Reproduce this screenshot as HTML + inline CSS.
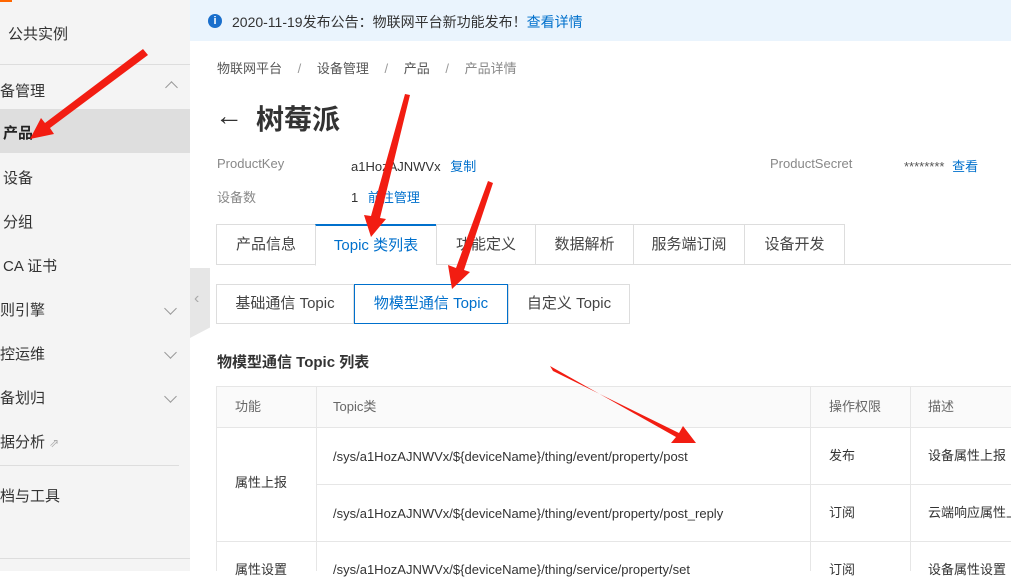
<!DOCTYPE html>
<html><head><meta charset="utf-8"><style>
*{margin:0;padding:0;box-sizing:border-box}
body{width:1011px;height:571px;overflow:hidden;position:relative;background:#fff;font-family:"Liberation Sans","Noto Sans CJK SC",sans-serif;color:#333;font-size:14px}
.a{position:absolute;white-space:nowrap}
#side{position:absolute;left:0;top:0;width:190px;height:571px;background:#f4f4f4}
.si{position:absolute;left:0;font-size:15px;color:#333}
.chev{position:absolute;left:166px;width:9px;height:9px;border-right:1.5px solid #999;border-bottom:1.5px solid #999}
.tab{position:absolute;top:224px;height:41px;border:1px solid #ddd;border-right:none;background:#fff;font-size:15px;color:#444;text-align:center;line-height:40px}
.st{position:absolute;top:284px;height:40px;border:1px solid #ddd;background:#fff;font-size:15px;color:#444;text-align:center;line-height:38px}
.hl{position:absolute;height:1px;background:#e6e6e6}
.vl{position:absolute;width:1px;background:#e6e6e6}
.c{position:absolute;font-size:13px;color:#333;white-space:nowrap;line-height:16px}
</style></head><body>
<div id="side">
<div style="position:absolute;left:0;top:0;width:12px;height:2px;background:#f60"></div>
<div class="si" style="top:23px;left:8px">公共实例</div>
<div style="position:absolute;left:0;top:64px;width:190px;height:1px;background:#ddd"></div>
<div class="si" style="top:80px">备管理</div>
<div style="position:absolute;left:167px;top:83px;width:9px;height:9px;border-left:1.5px solid #999;border-top:1.5px solid #999;transform:rotate(45deg)"></div>
<div style="position:absolute;left:0;top:109px;width:190px;height:44px;background:#dedede"></div>
<div class="si" style="top:122px;left:3px;font-weight:bold;color:#222">产品</div>
<div class="si" style="top:167px;left:3px">设备</div>
<div class="si" style="top:211px;left:3px">分组</div>
<div class="si" style="top:255px;left:3px">CA 证书</div>
<div class="si" style="top:299px">则引擎</div><div class="chev" style="top:304px;transform:rotate(45deg)"></div>
<div class="si" style="top:343px">控运维</div><div class="chev" style="top:348px;transform:rotate(45deg)"></div>
<div class="si" style="top:387px">备划归</div><div class="chev" style="top:392px;transform:rotate(45deg)"></div>
<div class="si" style="top:431px">据分析 <span style="font-size:12px;color:#aaa">⇗</span></div>
<div style="position:absolute;left:0;top:465px;width:179px;height:1px;background:#ddd"></div>
<div class="si" style="top:485px">档与工具</div>
<div style="position:absolute;left:0;top:558px;width:190px;height:1px;background:#ddd"></div>
</div>
<div style="position:absolute;left:190px;top:268px;width:20px;height:70px;background:#e6e6e6;clip-path:polygon(0 0,100% 0,100% 85%,0 100%)"></div>
<div class="a" style="left:194px;top:290px;color:#aaa;font-size:16px">‹</div>

<div style="position:absolute;left:190px;top:0;width:821px;height:41px;background:#eaf4fd"></div>
<div style="position:absolute;left:208px;top:14px;width:14px;height:14px;border-radius:50%;background:#1a6fcc;color:#fff;font-size:11px;font-weight:bold;text-align:center;line-height:14px">i</div>
<div class="a" style="left:232px;top:12px;font-size:14px;color:#333">2020-11-19发布公告：物联网平台新功能发布！<span style="color:#0070cc">查看详情</span></div>

<div class="a" style="left:217px;top:58px;font-size:13px;color:#555">物联网平台 <span style="color:#999;margin:0 12px">/</span> 设备管理 <span style="color:#999;margin:0 12px">/</span> 产品 <span style="color:#999;margin:0 12px">/</span> <span style="color:#888">产品详情</span></div>
<div class="a" style="left:215px;top:100px;font-size:28px;color:#333">←</div>
<div class="a" style="left:256px;top:98px;font-size:28px;font-weight:bold;color:#333">树莓派</div>
<div class="a" style="left:217px;top:156px;font-size:13px;color:#888">ProductKey</div>
<div class="a" style="left:351px;top:156px;font-size:13px;color:#333">a1HozAJNWVx <span style="color:#0070cc;margin-left:6px">复制</span></div>
<div class="a" style="left:217px;top:187px;font-size:13px;color:#888">设备数</div>
<div class="a" style="left:351px;top:187px;font-size:13px;color:#333">1 <span style="color:#0070cc;margin-left:6px">前往管理</span></div>
<div class="a" style="left:770px;top:156px;font-size:13px;color:#888">ProductSecret</div>
<div class="a" style="left:904px;top:156px;font-size:13px;color:#555">******** <span style="color:#0070cc;margin-left:4px">查看</span></div>

<div class="hl" style="left:216px;top:264px;width:795px;background:#ddd"></div>
<div class="tab" style="left:216px;width:99px">产品信息</div>
<div class="tab" style="left:315px;width:121px;border-top:2px solid #0070cc;border-bottom-color:#fff;color:#0070cc;height:42px">Topic 类列表</div>
<div class="tab" style="left:436px;width:99px">功能定义</div>
<div class="tab" style="left:535px;width:98px">数据解析</div>
<div class="tab" style="left:633px;width:111px">服务端订阅</div>
<div class="tab" style="left:744px;width:101px;border-right:1px solid #ddd">设备开发</div>

<div class="st" style="left:216px;width:138px">基础通信 Topic</div>
<div class="st" style="left:508px;width:122px">自定义 Topic</div>
<div class="st" style="left:354px;width:154px;border-color:#0070cc;color:#0070cc">物模型通信 Topic</div>

<div class="a" style="left:217px;top:351px;font-size:15px;font-weight:bold;color:#333">物模型通信 Topic 列表</div>

<div style="position:absolute;left:216px;top:386px;width:795px;height:41px;background:#fafafa"></div>
<div class="hl" style="left:216px;top:386px;width:795px"></div>
<div class="hl" style="left:216px;top:427px;width:795px"></div>
<div class="hl" style="left:316px;top:484px;width:695px"></div>
<div class="hl" style="left:216px;top:541px;width:795px"></div>
<div class="vl" style="left:216px;top:386px;height:185px"></div>
<div class="vl" style="left:316px;top:386px;height:185px"></div>
<div class="vl" style="left:810px;top:386px;height:185px"></div>
<div class="vl" style="left:910px;top:386px;height:185px"></div>
<div class="c" style="left:235px;top:399px;color:#666">功能</div>
<div class="c" style="left:333px;top:399px;color:#666">Topic类</div>
<div class="c" style="left:829px;top:399px;color:#666">操作权限</div>
<div class="c" style="left:928px;top:399px;color:#666">描述</div>
<div class="c" style="left:235px;top:475px">属性上报</div>
<div class="c" style="left:333px;top:449px">/sys/a1HozAJNWVx/${deviceName}/thing/event/property/post</div>
<div class="c" style="left:829px;top:448px">发布</div>
<div class="c" style="left:928px;top:448px">设备属性上报</div>
<div class="c" style="left:333px;top:506px">/sys/a1HozAJNWVx/${deviceName}/thing/event/property/post_reply</div>
<div class="c" style="left:829px;top:505px">订阅</div>
<div class="c" style="left:928px;top:505px">云端响应属性上报</div>
<div class="c" style="left:235px;top:562px">属性设置</div>
<div class="c" style="left:333px;top:562px">/sys/a1HozAJNWVx/${deviceName}/thing/service/property/set</div>
<div class="c" style="left:829px;top:562px">订阅</div>
<div class="c" style="left:928px;top:562px">设备属性设置</div>

<svg style="position:absolute;left:0;top:0" width="1011" height="571">
<g fill="#f21d12">
<polygon points="143,49 148,55 50,128 54,134 30,139 41,118 45,123"/>
<polygon points="405,94 410,95 380,218 386,219 371,237 364,215 371,216"/>
<polygon points="488,181 493,183 464,270 470,272 452,289 448,265 456,268"/>
<polygon points="550,366 553,371 679,433 683,426 696,443 671,443 676,437"/>
</g>
</svg>
</body></html>
